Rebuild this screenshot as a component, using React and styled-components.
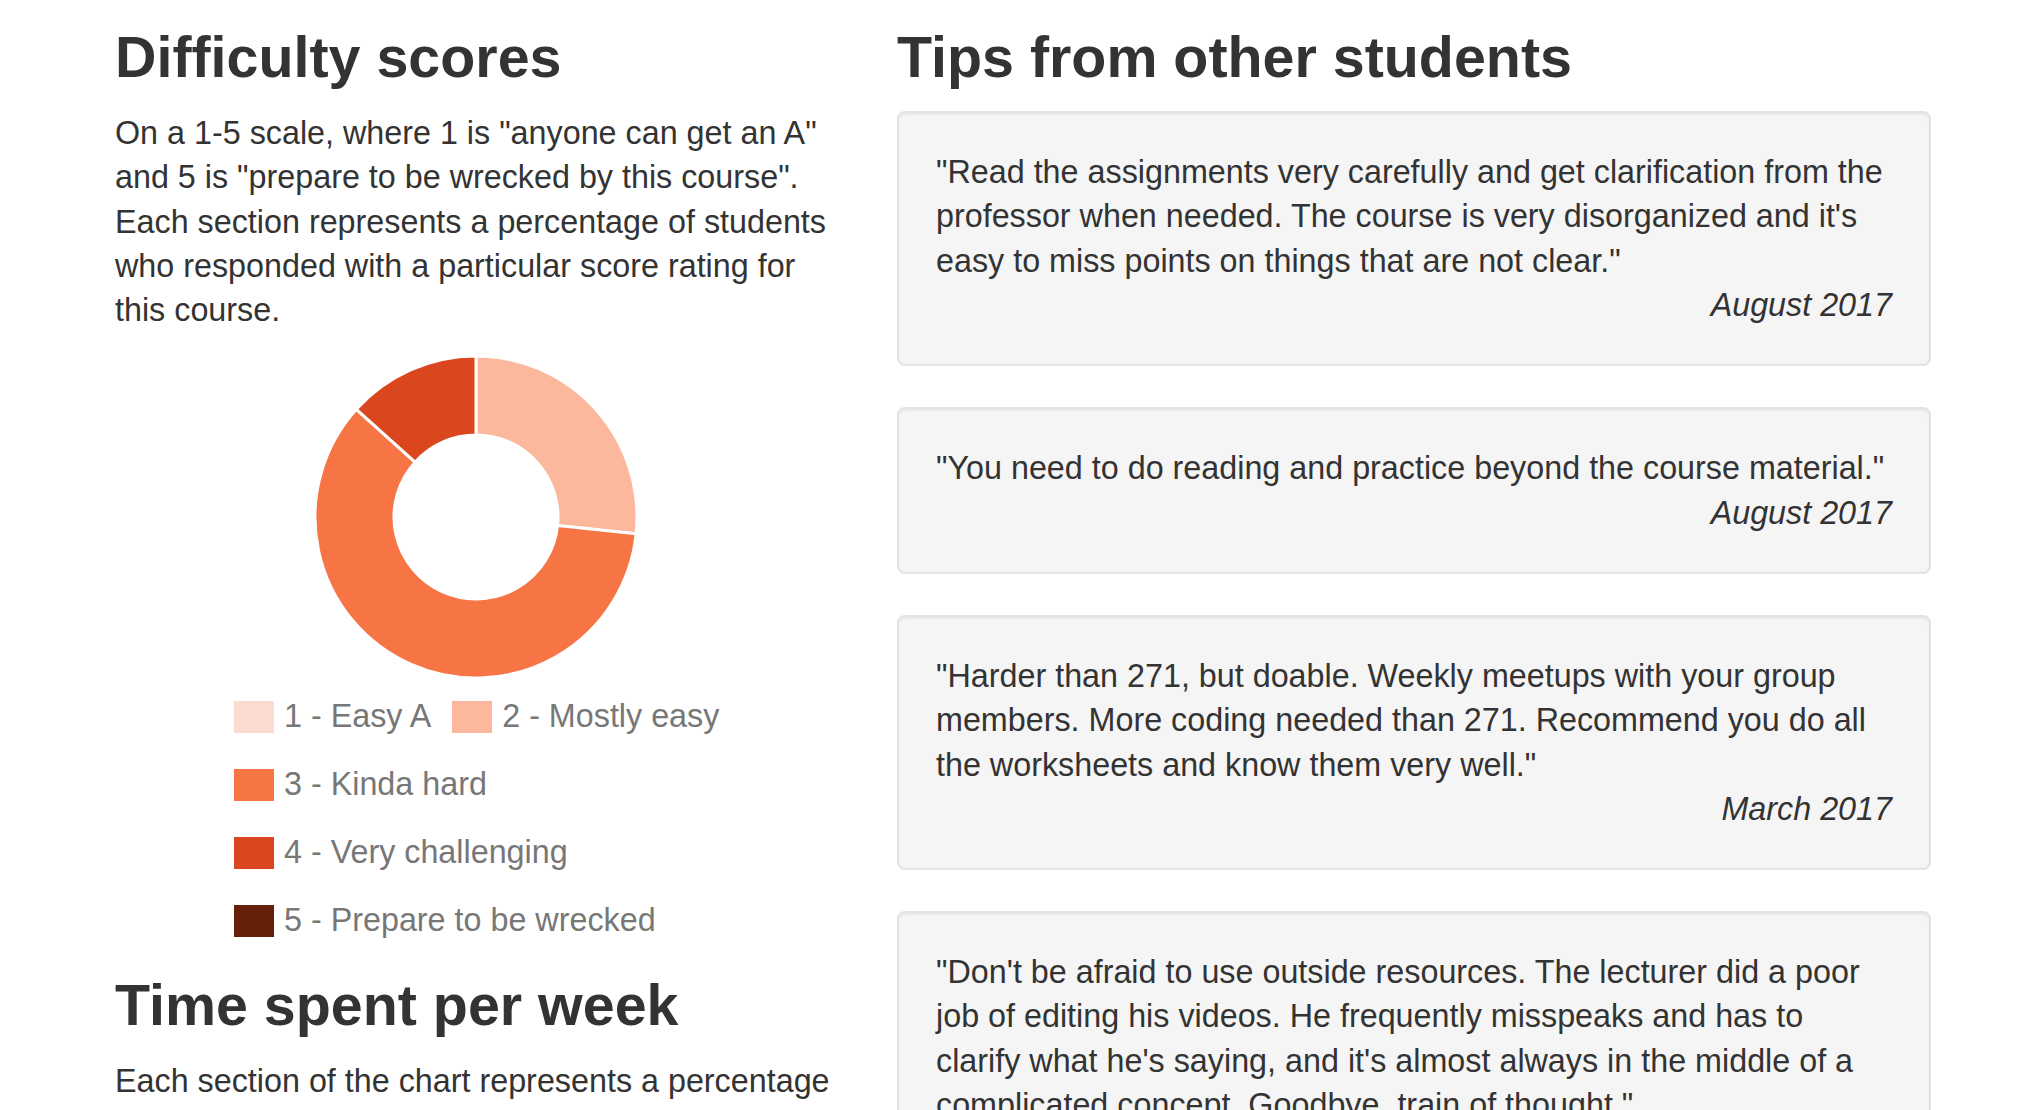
import React from 'react';
import styled, { createGlobalStyle } from 'styled-components';

const GlobalStyle = createGlobalStyle`
  body {
    margin: 0;
    background: #fff;
    color: #333;
    font-family: "Liberation Sans", Helvetica, Arial, sans-serif;
    font-size: 32.3px;
    line-height: 44.3px;
  }
`;

const Page = styled.div`
  display: grid;
  grid-template-columns: 722px 1034px;
  column-gap: 60px;
  align-items: start;
  padding: 26px 0 0 115px;
`;

const Column = styled.section`
  display: flex;
  flex-direction: column;
`;

const Heading = styled.h2`
  margin: ${p => p.$top || 0}px 0 22px;
  font-size: 57.4px;
  font-weight: 700;
  line-height: 1.1;
  color: #333;
`;

const Text = styled.p`
  margin: 0;
`;

const ChartWrap = styled.div`
  display: flex;
  justify-content: center;
  margin: 19px 0 13px;
`;

const Legend = styled.ul`
  display: flex;
  flex-wrap: wrap;
  column-gap: 21px;
  row-gap: 24px;
  width: 520px;
  margin: 0 0 0 119px;
  padding: 0;
  list-style: none;
`;

const LegendItem = styled.li`
  display: flex;
  align-items: center;
  gap: 10px;
  height: 44px;
  font-size: 32.3px;
  color: #777;
  white-space: nowrap;
`;

const Swatch = styled.span`
  width: 40px;
  height: 32px;
  background: ${p => p.$color};
`;

const Tip = styled.div`
  background: #f5f5f5;
  border: 2px solid #e3e3e3;
  border-radius: 8px;
  box-shadow: inset 0 2px 2px rgba(0, 0, 0, 0.05);
  padding: 37px;
  margin-bottom: 41px;
`;

const Quote = styled.p`
  margin: 0;
`;

const TipDate = styled.div`
  text-align: right;
  font-style: italic;
`;

const scores = [
  { label: '1 - Easy A', color: '#fddbd0', value: 0 },
  { label: '2 - Mostly easy', color: '#fbb89c', value: 4 },
  { label: '3 - Kinda hard', color: '#f77445', value: 9 },
  { label: '4 - Very challenging', color: '#da461d', value: 2 },
  { label: '5 - Prepare to be wrecked', color: '#66200a', value: 0 },
];

const tips = [
  {
    text: '"Read the assignments very carefully and get clarification from the professor when needed. The course is very disorganized and it\'s easy to miss points on things that are not clear."',
    date: 'August 2017',
  },
  {
    text: '"You need to do reading and practice beyond the course material."',
    date: 'August 2017',
  },
  {
    text: '"Harder than 271, but doable. Weekly meetups with your group members. More coding needed than 271. Recommend you do all the worksheets and know them very well."',
    date: 'March 2017',
  },
  {
    text: '"Don\'t be afraid to use outside resources. The lecturer did a poor job of editing his videos. He frequently misspeaks and has to clarify what he\'s saying, and it\'s almost always in the middle of a complicated concept. Goodbye, train of thought."',
    date: 'February 2017',
  },
];

// angles clockwise from 12 o'clock
const point = (c, r, a) => [c + r * Math.sin(a), c - r * Math.cos(a)];

const arcPath = (c, r0, r1, a0, a1) => {
  const large = a1 - a0 > Math.PI ? 1 : 0;
  const [x0, y0] = point(c, r1, a0);
  const [x1, y1] = point(c, r1, a1);
  const [x2, y2] = point(c, r0, a1);
  const [x3, y3] = point(c, r0, a0);
  return `M${x0} ${y0} A${r1} ${r1} 0 ${large} 1 ${x1} ${y1} L${x2} ${y2} A${r0} ${r0} 0 ${large} 0 ${x3} ${y3} Z`;
};

const Donut = ({ data, size = 330 }) => {
  const total = data.reduce((s, d) => s + d.value, 0);
  const c = size / 2;
  let start = 0;
  return (
    <svg width={size} height={size} viewBox={`0 0 ${size} ${size}`}>
      {data.filter(d => d.value > 0).map(d => {
        const end = start + (d.value / total) * Math.PI * 2;
        const path = arcPath(c, 82, 161, start, end);
        start = end;
        return <path key={d.label} d={path} fill={d.color} stroke="#fff" strokeWidth="3" />;
      })}
    </svg>
  );
};

const App = () => (
  <>
    <GlobalStyle />
    <Page>
      <Column>
        <Heading>Difficulty scores</Heading>
        <Text>
          On a 1-5 scale, where 1 is "anyone can get an A" and 5 is "prepare to be wrecked by this
          course". Each section represents a percentage of students who responded with a particular
          score rating for this course.
        </Text>
        <ChartWrap>
          <Donut data={scores} />
        </ChartWrap>
        <Legend>
          {scores.map(s => (
            <LegendItem key={s.label}>
              <Swatch $color={s.color} />
              {s.label}
            </LegendItem>
          ))}
        </Legend>
        <Heading $top={31}>Time spent per week</Heading>
        <Text>
          Each section of the chart represents a percentage of students who responded with a
          particular number of hours spent on this course each week.
        </Text>
      </Column>
      <Column>
        <Heading>Tips from other students</Heading>
        {tips.map((t, i) => (
          <Tip key={i}>
            <Quote>{t.text}</Quote>
            <TipDate>{t.date}</TipDate>
          </Tip>
        ))}
      </Column>
    </Page>
  </>
);

export default App;
